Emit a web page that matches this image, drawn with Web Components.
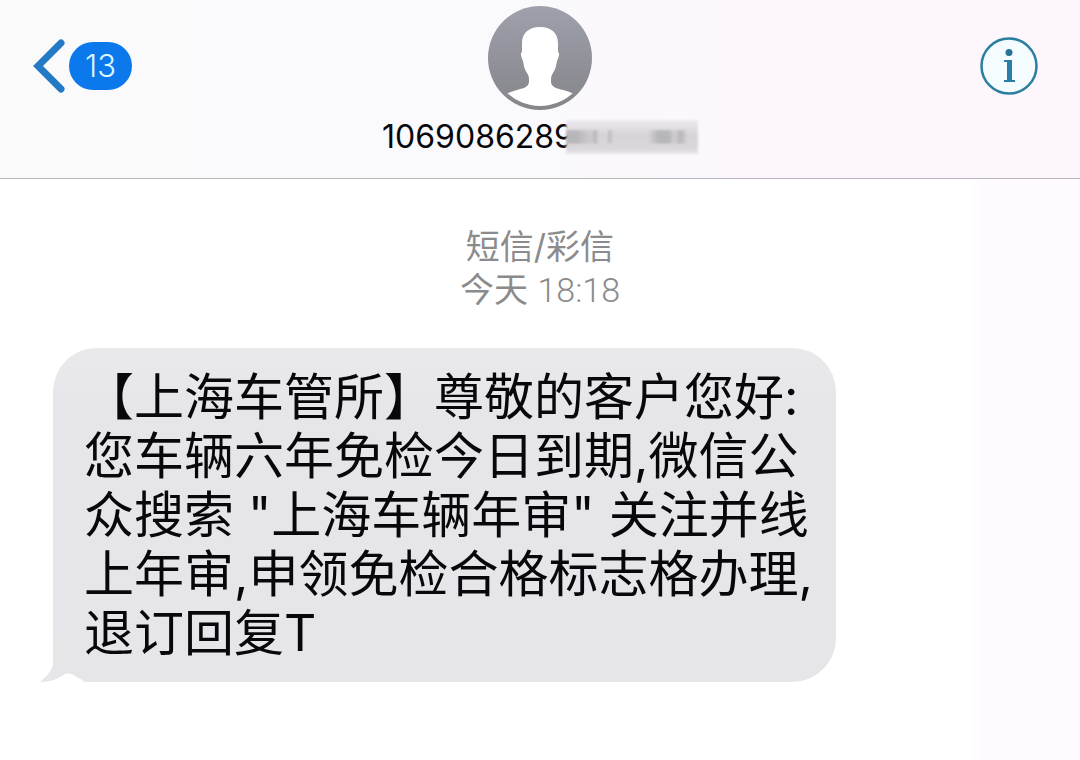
<!DOCTYPE html>
<html lang="zh-CN">
<head>
<meta charset="utf-8">
<meta name="viewport" content="width=device-width, initial-scale=1">
<title>短信</title>
<style>
body {
  margin: 0;
  min-height: 100vh;
  background: linear-gradient(90deg, #fff 90%, #fefafe 91%);
  font-family: Inter, "Noto Sans CJK SC", sans-serif;
  color: #08080c;
}
</style>
</head>
<body>
<message-thread>
  <thread-header slot="header" unread="13">1069086289</thread-header>
  <time-stamp label="短信/彩信">今天 <time>18:18</time></time-stamp>
  <message-bubble>【上海车管所】尊敬的客户您好:<br>您车辆六年免检今日到期,微信公<br>众搜索 "上海车辆年审" 关注并线<br>上年审,申领免检合格标志格办理,<br>退订回复T</message-bubble>
</message-thread>

<script>
class MessageThread extends HTMLElement {
  constructor() {
    super();
    this.attachShadow({ mode: "open" }).innerHTML = `
<style>
:host {
    display: block;
}
main {
    display: flex;
    flex-direction: column;
    align-items: flex-start;
    gap: 36px;
    padding: 46px 53px;
}
</style>
<slot name="header"></slot>
<main><slot></slot></main>
        `;
  }
}

class BackButton extends HTMLElement {
  constructor() {
    super();
    this.attachShadow({ mode: "open" }).innerHTML = `
<style>
:host {
    display: block;
}
button {
    display: flex;
    align-items: center;
    gap: 3px;
    padding: 0;
    border: 0;
    background: none;
    font: inherit;
    cursor: pointer;
}
svg {
    display: block;
}
.badge {
    padding: 0 16px;
    border-radius: 24px;
    background: #0b79ec;
    color: #dcf6ff;
    font-size: 31px;
    font-weight: 300;
    line-height: 48px;
}
</style>
<button type="button" aria-label="返回">
  <svg width="34" height="56" viewBox="0 0 34 56" fill="none" stroke="#2379c4" stroke-width="7" stroke-linecap="round" stroke-linejoin="miter">
    <path d="M29 5 6 28l23 23"/>
  </svg>
  <span class="badge"><slot></slot></span>
</button>
        `;
  }
}

class ContactAvatar extends HTMLElement {
  constructor() {
    super();
    this.attachShadow({ mode: "open" }).innerHTML = `
<style>
:host, svg {
    display: block;
}
</style>
<svg width="104" height="104" viewBox="0 0 104 104" aria-hidden="true">
  <defs>
    <linearGradient id="fill" x1="0" y1="0" x2="0" y2="1">
      <stop offset="0" stop-color="#9ea0ab"/>
      <stop offset="1" stop-color="#85858a"/>
    </linearGradient>
    <clipPath id="disc"><circle cx="52" cy="52" r="48"/></clipPath>
  </defs>
  <circle cx="52" cy="52" r="52" fill="url(#fill)"/>
  <path clip-path="url(#disc)" fill="#fff" d="M52 21c11 0 18 6 18 16v9c2 1 1 5-1 9-1 6-2 9-4 12-2 3-2 5-2 8 0 3 1 5 5 7 6 2 13 3 20 7v17H16V89c7-4 14-5 20-7 4-2 5-4 5-7s0-5-2-8c-2-3-3-6-4-12-2-4-3-8-1-9v-9c0-10 7-16 18-16z"/>
</svg>
        `;
  }
}

class InfoButton extends HTMLElement {
  constructor() {
    super();
    this.attachShadow({ mode: "open" }).innerHTML = `
<style>
:host, svg {
    display: block;
}
button {
    display: block;
    padding: 0;
    border: 0;
    background: none;
    cursor: pointer;
}
</style>
<button type="button" aria-label="详细信息">
  <svg width="58" height="58" viewBox="0 0 58 58">
    <circle cx="29" cy="29" r="27.5" fill="#f4fcff" stroke="#2b7f9e" stroke-width="2.5"/>
    <circle cx="29" cy="15.500" r="3.500" fill="#287494"/>
    <path fill="#2a7da6" d="M24 23h8v20h3v2H24v-2h3V25h-3z"/>
  </svg>
</button>
        `;
  }
}

class ThreadHeader extends HTMLElement {
  constructor() {
    super();
    this.attachShadow({ mode: "open" }).innerHTML = `
<style>
:host {
    display: block;
}
header {
    display: grid;
    grid-template-columns: 1fr auto 1fr;
    align-items: start;
    padding: 6px 0 23px;
    border-bottom: 1px solid #b9b7bb;
    background: linear-gradient(90deg, #fafafb, #faf9fc 50%, #fdf6fd 75%);
}
.side {
    display: flex;
    align-items: center;
    height: 120px;
    padding: 0 42px 0 32px;
}
.side.end {
    justify-content: flex-end;
}
.contact {
    display: flex;
    flex-direction: column;
    align-items: center;
    gap: 9px;
}
.number {
    display: flex;
    align-items: center;
    margin: 0;
    font-size: 32px;
    font-weight: 400;
    line-height: 36px;
}
/* blurred patch over the rest of the number */
.mask {
    width: 132px;
    height: 34px;
    margin-left: -8px;
    background:
        linear-gradient(90deg, #77777a55 8%, #77777a22 17% 20%, #77777a55 22%, #77777a00 25% 31%, #77777a44 33%, #77777a00 36% 62%, #77777a55 70% 78%, #77777a11 82%, #77777a55 87%, #77777a00 92%) center / 100% 40% no-repeat,
        linear-gradient(#eeebf0, #d6d4d8 45%, #dbd8dd 85%, #ebe7ed);
    filter: blur(1px);
    z-index: 1;
}
</style>
<header>
  <div class="side"><back-button></back-button></div>
  <div class="contact">
    <contact-avatar></contact-avatar>
    <h1 class="number"><slot></slot><span class="mask"></span></h1>
  </div>
  <div class="side end"><info-button></info-button></div>
</header>
        `;
  }

  connectedCallback() {
    this.shadowRoot.querySelector("back-button").textContent = this.getAttribute("unread");
  }
}

class TimeStamp extends HTMLElement {
  constructor() {
    super();
    this.attachShadow({ mode: "open" }).innerHTML = `
<style>
:host {
    display: block;
    align-self: stretch;
    text-align: center;
    color: #8b8b8d;
    font-size: 34px;
    line-height: 43px;
}
p {
    margin: 0;
}
::slotted(time) {
    font-family: Roboto, sans-serif;
    font-weight: 300;
}
</style>
<p class="label"></p>
<p><slot></slot></p>
        `;
  }

  connectedCallback() {
    this.shadowRoot.querySelector(".label").textContent = this.getAttribute("label");
  }
}

class MessageBubble extends HTMLElement {
  constructor() {
    super();
    this.attachShadow({ mode: "open" }).innerHTML = `
<style>
:host {
    display: block;
    position: relative;
    padding: 20px 23px 19px 31px;
    border-radius: 44px;
    background: linear-gradient(#e9e9eb, #e6e5ea 20% 92%, #e6e6e7);
    font-size: 50px;
    line-height: 59px;
}
p {
    margin: 0;
}
.tail {
    position: absolute;
    left: -13px;
    bottom: 0;
}
</style>
<p><slot></slot></p>
<svg class="tail" width="60" height="50" viewBox="0 0 60 50" aria-hidden="true">
  <path fill="#e6e6e8" d="M13 0v33c-2 7-6 11-13 17 10 0 18-3 25-8 7-2 13 3 20 8h15L40 15z"/>
</svg>
        `;
  }
}

customElements.define("back-button", BackButton);
customElements.define("contact-avatar", ContactAvatar);
customElements.define("info-button", InfoButton);
customElements.define("thread-header", ThreadHeader);
customElements.define("time-stamp", TimeStamp);
customElements.define("message-bubble", MessageBubble);
customElements.define("message-thread", MessageThread);
</script>
</body>
</html>
